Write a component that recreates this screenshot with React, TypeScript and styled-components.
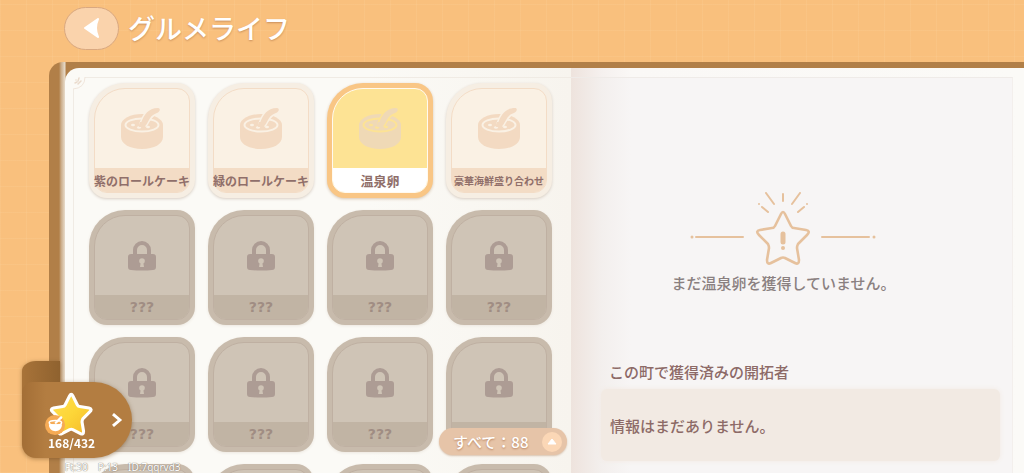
import React from "react";
import styled, { createGlobalStyle, css } from "styled-components";

const Global = createGlobalStyle`
  *, *::before, *::after { box-sizing: border-box; }
  html, body { margin: 0; }
  body {
    overflow: hidden;
    font-family: "Noto Sans CJK JP", "Noto Sans", sans-serif;
    color: #8d6a67;
  }
  button { font: inherit; color: inherit; border: 0; padding: 0; margin: 0; background: none; cursor: pointer; }
  h1, h2, p { margin: 0; }
`;

const Screen = styled.div`
  position: relative;
  display: flex;
  flex-direction: column;
  height: 100vh;
  overflow: hidden;
  background-color: #f9c07d;
  background-image:
    repeating-linear-gradient(90deg, rgba(255, 236, 200, 0.09) 0 1px, transparent 1px 26px),
    repeating-linear-gradient(0deg, rgba(255, 236, 200, 0.09) 0 1px, transparent 1px 26px);
`;

const Header = styled.header`
  flex: none;
  display: flex;
  align-items: center;
  gap: 9px;
  height: 62px;
  padding: 0 64px 6px;
`;

const BackButton = styled.button`
  display: grid;
  place-items: center;
  width: 55px;
  height: 43px;
  border: 1px solid #d9a880;
  border-radius: 22px;
  background: #fad3ac;
`;

const Title = styled.h1`
  font-size: 27px;
  line-height: 40px;
  font-weight: 500;
  color: #fff;
  text-shadow: 0 1px 2px #c98f5c;
`;

const Book = styled.main`
  flex: 1;
  min-height: 0;
  display: flex;
  margin-left: 49px;
  padding: 6px 0 0 16px;
  border-radius: 14px 0 0 0;
  background: linear-gradient(90deg, #b17f48 0 10px, #c9aa86 12px, #e8dccb 16px, #b17f48 17px);
`;

const LeftPage = styled.section`
  flex: 508 1 0;
  min-width: 0;
  padding: 9px 0 0 8px;
  border-radius: 14px 0 0 0;
  overflow: hidden;
  background: linear-gradient(90deg, #fbfaf6 0 60%, #f7f4ee 100%);
`;

const Frame = styled.div`
  position: relative;
  height: 100%;
  border-top: 1px solid #f0ebe4;
  border-left: 1px solid #f0ebe4;
`;

const Corner = styled.svg`
  position: absolute;
  left: -1px;
  top: -1px;
`;

const Cards = styled.div`
  display: grid;
  grid-template-columns: repeat(4, minmax(0, 1fr));
  gap: 12px 13px;
  padding: 5px 19px 0 15px;
`;

type Kind = "open" | "selected" | "locked";

const kinds = {
  open: { rim: "#f6eee3", line: "#f3dcc6", fill: "#faf1e4", bar: "#f3dcc5", shadow: "#d8cec4" },
  selected: { rim: "#f9c685", line: "#fffaf0", fill: "#fde394", bar: "#ffffff", shadow: "#d8c5b0" },
  locked: { rim: "#c8bbac", line: "#bfb0a2", fill: "#cfc4b6", bar: "#c1b4a4", shadow: "#ece7df" },
};

const Card = styled.button<{ $kind: Kind }>`
  display: block;
  height: 115px;
  padding: 5px;
  border-radius: 36px 18px 18px 18px;
  ${({ $kind }) => css`
    background: ${kinds[$kind].rim};
    box-shadow: 0 1px 3px ${kinds[$kind].shadow};
  `}
`;

const CardFace = styled.span<{ $kind: Kind }>`
  display: flex;
  flex-direction: column;
  height: 100%;
  border-radius: 31px 13px 13px 13px;
  ${({ $kind }) => css`
    border: 1px solid ${kinds[$kind].line};
    background: ${kinds[$kind].fill};
  `}
`;

const CardArt = styled.span`
  flex: 1;
  display: grid;
  place-items: center;
`;

const CardLabel = styled.span<{ $kind: Kind; $size: number }>`
  display: flex;
  justify-content: center;
  align-items: center;
  height: 24px;
  border-radius: 0 0 12px 12px;
  white-space: nowrap;
  font-weight: 700;
  font-size: ${({ $size }) => $size}px;
  background: ${({ $kind }) => kinds[$kind].bar};
  color: #906f6a;
  ${({ $kind }) =>
    $kind === "locked" &&
    css`
      color: #a08d83;
      font-family: "DejaVu Sans", sans-serif;
    `}
`;

const RightPage = styled.section`
  flex: 451 1 0;
  min-width: 0;
  padding: 9px 11px 0 0;
  background: linear-gradient(90deg, #eee3dd 0, #f5f0ee 30px, #faf8f6 60px, #fbfaf7 100%);
`;

const RightFrame = styled.div`
  height: 100%;
  padding: 114px 12px 0 30px;
  border-top: 1px solid #efebe8;
  border-right: 1px solid #f3efec;
  background: linear-gradient(90deg, #eee3dd 0, #f3efed 30px, #f7f5f5 60px, #f7f5f5 100%);
`;

const Notice = styled.div`
  display: flex;
  flex-direction: column;
  align-items: center;
  gap: 4px;
  height: 168px;
  padding-right: 34px;
  font-size: 15px;
  line-height: 24px;
  font-weight: 500;
  color: #8a8080;
`;

const SectionTitle = styled.h2`
  padding-left: 8px;
  font-size: 15px;
  line-height: 24px;
  font-weight: 500;
`;

const InfoBox = styled.p`
  display: flex;
  align-items: center;
  height: 72px;
  margin-top: 5px;
  padding-left: 9px;
  border-radius: 6px;
  font-size: 15px;
  font-weight: 500;
  background: #f2eae3;
  box-shadow: 0 0 5px #f2eae3;
`;

const Filter = styled.button`
  position: absolute;
  left: 439px;
  bottom: 18px;
  display: flex;
  align-items: center;
  justify-content: space-between;
  width: 128px;
  height: 27px;
  padding: 0 4px 0 14px;
  border-radius: 14px;
  font-size: 15px;
  line-height: 24px;
  font-weight: 500;
  color: #fff;
  text-shadow: 0 1px 2px #b98461;
  background: #e6c4a8;
  box-shadow: 0 1px 2px #d8c2ae;
`;

const Ribbon = styled.button`
  position: absolute;
  left: 22px;
  bottom: 15px;
  width: 110px;
  height: 97px;
  padding-top: 21px;
  filter: drop-shadow(0 1px 2px rgba(110, 72, 30, 0.5));
  &::before {
    content: "";
    position: absolute;
    left: 0;
    top: 0;
    width: 38px;
    height: 50px;
    border-radius: 14px 0 0 0 / 10px 0 0 0;
    background: linear-gradient(90deg, #a87339, #8f622f);
  }
`;

const RibbonFace = styled.span`
  position: relative;
  display: flex;
  align-items: center;
  gap: 12px;
  height: 76px;
  padding: 0 9px 0 22px;
  border-radius: 10px 38px 38px 14px;
  background: linear-gradient(90deg, #a36e36 0, #b37d41 24px);
`;

const Score = styled.span`
  display: flex;
  flex-direction: column;
  align-items: center;
  width: 56px;
  font-size: 12px;
  line-height: 14px;
  font-weight: 700;
  color: #fff;
`;

const Status = styled.footer`
  position: absolute;
  left: 65px;
  bottom: 0;
  display: flex;
  gap: 10px;
  font: 10px/12px "Noto Sans", sans-serif;
  color: #fff;
  text-shadow: 0 0 1px #8b8178, 0 0 1px #8b8178;
`;

const Bowl = ({ color, gap }: { color: string; gap: string }) => (
  <svg width="44" height="44" viewBox="0 0 44 44" aria-hidden="true">
    <path d="M1 18v12c0 7 9 12 21 12s21-5 21-12V18z" fill={color} />
    <ellipse cx="22" cy="18" rx="21" ry="11" fill={color} />
    <ellipse cx="22" cy="18" rx="16.5" ry="6.5" fill={color} stroke={gap} strokeWidth="2" />
    <ellipse cx="13" cy="18" rx="2" ry="1.2" fill={gap} />
    <ellipse cx="19" cy="20.5" rx="2" ry="1.2" fill={gap} />
    <ellipse cx="28" cy="20" rx="2" ry="1.2" fill={gap} />
    <path
      d="M21 16C24 8 28 1 38 1c3 0 2 4-1 5-7 2-8 8-11 12q-5 1-5-2z"
      fill={color}
      stroke={gap}
      strokeWidth="3"
      paintOrder="stroke"
    />
    <path d="M20 15h7l-2 5h-6z" fill={color} />
  </svg>
);

const Lock = () => (
  <svg width="28" height="30" viewBox="0 0 28 30" aria-hidden="true">
    <path d="M7 14V9a7 7 0 0 1 14 0v5" fill="none" stroke="#ad9c94" strokeWidth="4" />
    <path d="M3 13h22q3 0 3 3v10q0 3-3 3-11 1-22 0-3 0-3-3V16q0-3 3-3z" fill="#ad9c94" />
    <circle cx="14" cy="20" r="2.8" fill="#cfc4b6" />
    <path d="M13 20h2l1 6h-4z" fill="#cfc4b6" />
  </svg>
);

const starPath =
  "M26 5Q28 1 30 5L36 17Q37 19 39 19L51 21Q56 22 52 26L43 35Q42 37 42 39L44 51Q44 56 40 54L30 49Q28 48 26 49L16 54Q12 56 12 51L14 39Q14 37 13 35L4 26Q0 22 5 21L17 19Q19 19 20 17z";

const NoticeArt = () => (
  <svg width="186" height="75" viewBox="0 0 186 75" fill="none" stroke="#e6c19d" strokeWidth="2" strokeLinecap="round" aria-hidden="true">
    <path d="M6 45h47M132 45h47" />
    <circle cx="2" cy="45" r="1.5" fill="#e6c19d" stroke="none" />
    <circle cx="184" cy="45" r="1.5" fill="#e6c19d" stroke="none" />
    <path d="M76 1l8 11M93 2v7M110 1l-8 11M72 15l6 5M114 15l-6 5M69 12h0M117 12h0" />
    <g transform="translate(65 17)"><path d={starPath} strokeWidth="2.6" strokeLinejoin="round" /></g>
    <path d="M93 42v8" strokeWidth="5" />
    <circle cx="93" cy="56" r="2" fill="#e6c19d" stroke="none" />
  </svg>
);

const StarBadge = () => (
  <svg width="54" height="45" viewBox="-6 0 70 58" aria-hidden="true">
    <defs>
      <linearGradient id="gold" x1="0" y1="0" x2="1" y2="1">
        <stop offset="0" stopColor="#ffdf52" />
        <stop offset="0.5" stopColor="#fdd638" />
        <stop offset="1" stopColor="#f5b929" />
      </linearGradient>
    </defs>
    <g transform="translate(0 1)">
      <path d={starPath} fill="url(#gold)" stroke="#fff" strokeWidth="4" strokeLinejoin="round" />
    </g>
    <circle cx="7" cy="44" r="13" fill="#f6ab55" />
    <path d="M-1 43h17c0 12-17 12-17 0z" fill="#fff" />
    <ellipse cx="7.500" cy="41" rx="8" ry="3" fill="none" stroke="#fff" strokeWidth="2" />
    <path d="M8 41l7-7" stroke="#fff" strokeWidth="3" strokeLinecap="round" />
  </svg>
);

const dishes: { name?: string; kind: Kind; size: number }[] = [
  { name: "紫のロールケーキ", kind: "open", size: 12 },
  { name: "緑のロールケーキ", kind: "open", size: 12 },
  { name: "温泉卵", kind: "selected", size: 13 },
  { name: "豪華海鮮盛り合わせ", kind: "open", size: 10 },
  ...Array.from({ length: 7 }, () => ({ name: "???", kind: "locked" as Kind, size: 14 })),
  ...Array.from({ length: 5 }, () => ({ kind: "locked" as Kind, size: 14 })),
];

export default function App() {
  return (
    <Screen>
      <Global />
      <Header>
        <BackButton aria-label="戻る">
          <svg width="16" height="20" viewBox="0 0 16 20" aria-hidden="true">
            <path d="M14 1Q10 10 14 19L1 10z" fill="#fff" stroke="#fff" strokeWidth="2" strokeLinejoin="round" />
          </svg>
        </BackButton>
        <Title>グルメライフ</Title>
      </Header>
      <Book>
        <LeftPage>
          <Frame>
            <Corner width="14" height="14" viewBox="0 0 14 14" aria-hidden="true">
              <path d="M0 0h12Q12 11 0 12z" fill="#fbfaf6" />
              <path d="M12 0Q12 11 0 12" fill="none" stroke="#f0e6dc" />
              <path d="M3 3h0M2 6l2-1M6 1L5 4M5 7l3-3" stroke="#eadbcd" strokeWidth="1.5" strokeLinecap="round" />
            </Corner>
            <Cards>
              {dishes.map(({ name, kind, size }, i) => (
                <Card key={i} $kind={kind} aria-pressed={kind === "selected"} disabled={kind === "locked"}>
                  <CardFace $kind={kind}>
                    <CardArt>
                      {kind === "locked" ? (
                        <Lock />
                      ) : (
                        <Bowl color={kind === "selected" ? "#efd9b6" : "#f3dac2"} gap={kinds[kind].fill} />
                      )}
                    </CardArt>
                    <CardLabel $kind={kind} $size={size}>{name}</CardLabel>
                  </CardFace>
                </Card>
              ))}
            </Cards>
          </Frame>
        </LeftPage>
        <RightPage>
          <RightFrame>
            <Notice>
              <NoticeArt />
              <p>まだ温泉卵を獲得していません。</p>
            </Notice>
            <SectionTitle>この町で獲得済みの開拓者</SectionTitle>
            <InfoBox>情報はまだありません。</InfoBox>
          </RightFrame>
        </RightPage>
      </Book>
      <Filter>
        <span>すべて：88</span>
        <svg width="22" height="22" viewBox="0 0 22 22" aria-hidden="true">
          <circle cx="11" cy="11" r="10" fill="#fbd7b6" />
          <path d="M11 8l4 5H7z" fill="#fff" stroke="#fff" strokeWidth="1" strokeLinejoin="round" />
        </svg>
      </Filter>
      <Ribbon aria-label="獲得数 168/432">
        <RibbonFace>
          <Score>
            <StarBadge />
            168/432
          </Score>
          <svg width="12" height="14" viewBox="0 0 12 14" fill="none" stroke="#fff" strokeWidth="3" aria-hidden="true">
            <path d="M2 1l7 6-7 6" />
          </svg>
        </RibbonFace>
      </Ribbon>
      <Status>
        <span>Ft:30</span>
        <span>P:13</span>
        <span>ID:7qqrvd3</span>
      </Status>
    </Screen>
  );
}
